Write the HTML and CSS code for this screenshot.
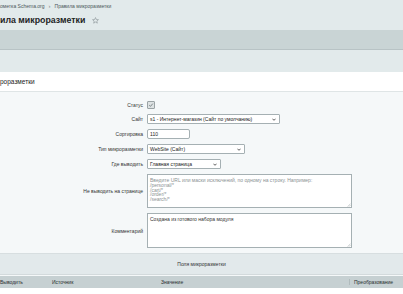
FILE: index.html
```html
<!DOCTYPE html>
<html lang="ru">
<head>
<meta charset="utf-8">
<link rel="stylesheet" href="styles.css">
</head>
<body>
<div class="top">
  <div class="crumbs"><span>ометка Schema.org</span><span class="sep">›</span><span>Правила микроразметки</span></div>
  <div class="title"><h1>ила микроразметки</h1><svg class="star" viewBox="0 0 10 10" width="7" height="7"><path d="M5 0.8 L6.2 3.6 L9.2 3.8 L6.9 5.8 L7.6 8.8 L5 7.2 L2.4 8.8 L3.1 5.8 L0.8 3.8 L3.8 3.6 Z" fill="none" stroke="#8a9598" stroke-width="0.9" stroke-linejoin="round"/></svg></div>
</div>
<div class="tabs"></div>
<div class="gap"></div>
<div class="panel">
  <div class="panel-head">роразметки</div>
  <div class="form">
    <div class="label">Статус</div>
    <div class="field"><span class="check"><svg viewBox="0 0 8 8" width="6" height="6"><path d="M1.6 4.2 L3.3 5.8 L6.4 2.2" fill="none" stroke="#6a7477" stroke-width="1.1"/></svg></span></div>

    <div class="label">Сайт</div>
    <div class="field"><div class="select w-site"><span>s1 - Интернет-магазин (Сайт по умолчанию)</span><svg class="arr" viewBox="0 0 6 4" width="4" height="3"><path d="M0.6 0.8 L3 3.2 L5.4 0.8" fill="none" stroke="#222" stroke-width="1.1"/></svg></div></div>

    <div class="label">Сортировка</div>
    <div class="field"><div class="input w-sort">110</div></div>

    <div class="label">Тип микроразметки</div>
    <div class="field"><div class="select w-type"><span>WebSite (Сайт)</span><svg class="arr" viewBox="0 0 6 4" width="4" height="3"><path d="M0.6 0.8 L3 3.2 L5.4 0.8" fill="none" stroke="#222" stroke-width="1.1"/></svg></div></div>

    <div class="label">Где выводить</div>
    <div class="field"><div class="select w-where"><span>Главная страница</span><svg class="arr" viewBox="0 0 6 4" width="4" height="3"><path d="M0.6 0.8 L3 3.2 L5.4 0.8" fill="none" stroke="#222" stroke-width="1.1"/></svg></div></div>

    <div class="label">Не выводить на странице</div>
    <div class="field"><div class="textarea placeholder">Введите URL или маски исключений, по одному на строку. Например:<br>/personal/*<br>/cart/*<br>/order/*<br>/search/*<svg class="grip" viewBox="0 0 4 4" width="4" height="4"><path d="M3.6 0.6 L0.6 3.6 M3.6 2 L2 3.6" stroke="#a0a8aa" stroke-width="0.5"/></svg></div></div>

    <div class="label">Комментарий</div>
    <div class="field"><div class="textarea">Создана из готового набора модуля<svg class="grip" viewBox="0 0 4 4" width="4" height="4"><path d="M3.6 0.6 L0.6 3.6 M3.6 2 L2 3.6" stroke="#a0a8aa" stroke-width="0.5"/></svg></div></div>
  </div>
  <div class="section">Поля микроразметки</div>
  <div class="thead">
    <div class="th c1">Выводить</div>
    <div class="th c2">Источник</div>
    <div class="th c3">Значение</div>
    <div class="th c4">Преобразование</div>
  </div>
  <div class="tbody"></div>
</div>
</body>
</html>
```
FILE: styles.css
```css
html, body {
  margin: 0;
  padding: 0;
}
body {
  width: 403px;
  height: 294px;
  overflow: hidden;
  background: #e2eaeb;
  font-family: "Liberation Sans", Arial, sans-serif;
  color: #2b2b2b;
}
.top {
  height: 30px;
  display: flex;
  flex-direction: column;
}
.crumbs {
  height: 12px;
  display: flex;
  align-items: center;
  gap: 4px;
  font-size: 5px;
  color: #4c585b;
}
.crumbs .sep {
  font-size: 6px;
  color: #7a8588;
}
.title {
  display: flex;
  align-items: center;
  gap: 7px;
  height: 16px;
}
.title h1 {
  margin: 0;
  font-size: 8.8px;
  font-weight: bold;
  color: #1f2526;
}
.star {
  display: block;
}
.tabs {
  height: 19px;
  background: #c9d4d5;
  border-bottom: 1px solid #b8c3c5;
}
.gap {
  height: 22px;
}
.panel {
  background: #f5f8f9;
}
.panel-head {
  height: 19px;
  background: #ffffff;
  border-bottom: 1px solid #dfe5e6;
  display: flex;
  align-items: center;
  font-size: 6.5px;
  color: #222;
}
.form {
  display: grid;
  grid-template-columns: 143px 1fr;
  column-gap: 4px;
  row-gap: 5px;
  padding: 9px 0 5px;
  align-items: center;
  border-bottom: 1px solid #d7dee0;
}
.label {
  text-align: right;
  font-size: 5px;
  color: #333;
}
.field {
  display: flex;
  align-items: center;
}
.check {
  width: 6px;
  height: 6px;
  border: 1px solid #9aa3a5;
  background: #dde2e3;
  border-radius: 1px;
  display: flex;
  align-items: center;
  justify-content: center;
}
.select, .input {
  height: 10px;
  box-sizing: border-box;
  border: 1px solid #a5b0b3;
  background: #fff;
  font-size: 5px;
  color: #222;
  display: flex;
  align-items: center;
  justify-content: space-between;
  padding: 0 3px 0 2px;
  border-radius: 1px;
}
.input {
  border-radius: 2px;
}
.w-site { width: 133px; }
.w-sort { width: 43px; }
.w-type { width: 98px; }
.w-where { width: 74px; }
.arr { display: block; }
.textarea {
  position: relative;
  width: 205px;
  height: 35px;
  box-sizing: border-box;
  border: 1px solid #a5b0b3;
  background: #fff;
  font-size: 5px;
  line-height: 4.8px;
  padding: 3px 2px;
  color: #333;
}
.textarea.placeholder {
  color: #8b9294;
  height: 34px;
}
.grip {
  position: absolute;
  right: 0;
  bottom: 0;
  display: block;
}
.section {
  height: 20px;
  background: #e2e9eb;
  display: flex;
  align-items: center;
  justify-content: center;
  font-size: 5px;
  color: #333;
  border-bottom: 1px solid #d3dadc;
}
.thead {
  margin-top: 1px;
  height: 12px;
  background: #c6d0d2;
  display: grid;
  grid-template-columns: 52px 109px 188px 54px;
  align-items: center;
  font-size: 5px;
  color: #2a2f30;
}
.th.c4 {
  border-left: 1px solid #b0bbbd;
  padding-left: 4px;
}
.tbody {
  height: 20px;
  background: #fff;
}
```
